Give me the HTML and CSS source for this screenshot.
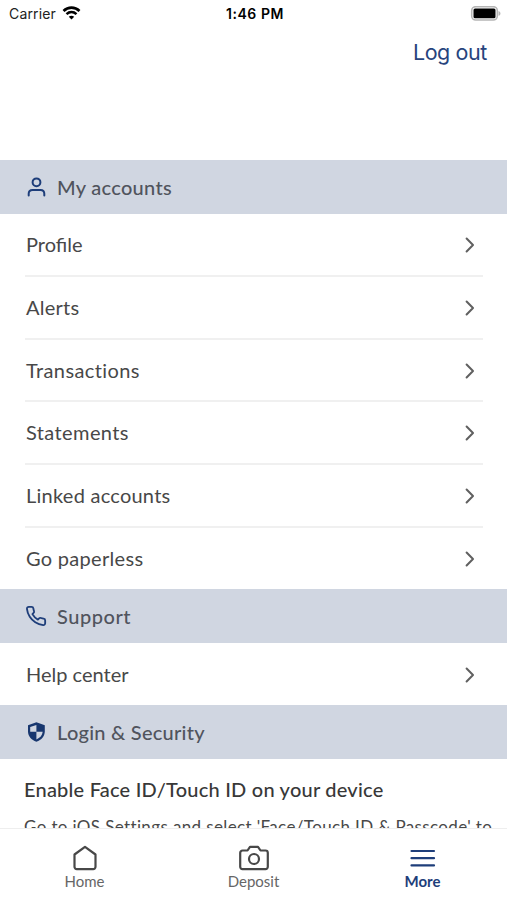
FILE: index.html
```
<!DOCTYPE html>
<html lang="en">
<head>
  <meta charset="UTF-8" />
  <meta name="viewport" content="width=device-width, initial-scale=1.0" />
  <title>More</title>
  <link rel="stylesheet" href="styles.css">
</head>
<body>
  <div class="screen">
    <div class="status-bar">
      <div class="carrier">
        <span>Carrier</span>
        <svg class="wifi" viewBox="0 0 18 14">
          <path d="M1 4.9C5.6.5 12.4.5 17 4.9" fill="none" stroke="#000" stroke-width="2.7" />
          <path d="M4 8.2c3-2.8 7-2.8 10 0" fill="none" stroke="#000" stroke-width="2.5" />
          <path d="M6.3 10.8c1.6-1.4 3.8-1.4 5.4 0L9 13.6z" />
        </svg>
      </div>
      <div class="time">1:46 PM</div>
      <div class="battery">
        <svg viewBox="0 0 31 15" width="31" height="15">
          <rect x="1.7" y=".7" width="25.600" height="13.300" rx="4" fill="#fff" stroke="#b5b5b5" stroke-width="1.600" />
          <rect x="3.500" y="2.500" width="22" height="9.700" rx="1.500" />
          <path d="M28.500 5c2.600.8 2.600 4 0 4.800z" fill="#b5b5b5" />
        </svg>
      </div>
    </div>

    <header class="top">
      <a href="#" class="logout">Log out</a>
    </header>

    <main class="content">
      <h2 class="section">
        <svg viewBox="0 0 22 22">
          <circle cx="11.500" cy="6.300" r="3.900" />
          <path d="M3.700 19.400v-1.600c0-2.300 1.500-3.800 3.800-3.800h8c2.300 0 3.800 1.500 3.800 3.800v1.600" />
        </svg>
        <span class="t-accounts">My accounts</span>
      </h2>
      <ul class="list">
        <li><a href="#"><span>Profile</span><svg viewBox="0 0 10 16"><path d="M1.6 1.5 8 8l-6.4 6.5" /></svg></a></li>
        <li><a href="#"><span class="t-alerts">Alerts</span><svg viewBox="0 0 10 16"><path d="M1.6 1.5 8 8l-6.4 6.5" /></svg></a></li>
        <li><a href="#"><span class="t-trans">Transactions</span><svg viewBox="0 0 10 16"><path d="M1.6 1.5 8 8l-6.4 6.5" /></svg></a></li>
        <li><a href="#"><span class="t-state">Statements</span><svg viewBox="0 0 10 16"><path d="M1.6 1.5 8 8l-6.4 6.5" /></svg></a></li>
        <li><a href="#"><span class="t-linked">Linked accounts</span><svg viewBox="0 0 10 16"><path d="M1.6 1.5 8 8l-6.4 6.5" /></svg></a></li>
        <li><a href="#"><span class="t-paper">Go paperless</span><svg viewBox="0 0 10 16"><path d="M1.6 1.5 8 8l-6.4 6.5" /></svg></a></li>
      </ul>

      <h2 class="section">
        <svg viewBox="0 0 24 24">
          <path d="M22 16.92v3a2 2 0 0 1-2.18 2 19.79 19.79 0 0 1-8.63-3.07 19.5 19.5 0 0 1-6-6 19.79 19.79 0 0 1-3.07-8.67A2 2 0 0 1 4.11 2h3a2 2 0 0 1 2 1.72 12.84 12.84 0 0 0 .7 2.81 2 2 0 0 1-.45 2.11L8.09 9.91a16 16 0 0 0 6 6l1.27-1.27a2 2 0 0 1 2.11-.45 12.84 12.84 0 0 0 2.81.7A2 2 0 0 1 22 16.92z" />
        </svg>
        <span class="t-support">Support</span>
      </h2>
      <ul class="list short">
        <li><a href="#"><span>Help center</span><svg viewBox="0 0 10 16"><path d="M1.6 1.5 8 8l-6.4 6.5" /></svg></a></li>
      </ul>

      <h2 class="section">
        <svg viewBox="0 0 22 22">
          <path class="shield" d="M11.4 1.200 3 4.300v6c0 5 3.300 8.700 8.400 10.500 5.100-1.800 8.400-5.500 8.400-10.500v-6z" />
          <path class="shield-cut" d="M11.400 3.900v6.900H5.200V5.900zM11.400 10.800h6.300c-.4 3.600-2.700 6.200-6.300 7.600z" />
        </svg>
        <span class="t-login">Login &amp; Security</span>
      </h2>
      <div class="info">
        <h3>Enable Face ID/Touch ID on your device</h3>
        <p>Go to iOS Settings and select 'Face/Touch ID &amp; Passcode' to</p>
      </div>
    </main>

    <nav class="tabs">
      <a href="#">
        <svg viewBox="0 0 32 26" width="32" height="26"><path d="M5.5 9.5 16 1.8l10.5 7.7v12.3a2.3 2.3 0 0 1-2.3 2.3H7.8a2.3 2.3 0 0 1-2.3-2.3z" /></svg>
        <span>Home</span>
      </a>
      <a href="#">
        <svg viewBox="0 0 32 26" width="32" height="26">
          <path d="M4.5 5.5h5L12 1.8h8l2.5 3.7h5a2.300 2.300 0 0 1 2.300 2.300v14a2.300 2.300 0 0 1-2.300 2.300h-23a2.300 2.300 0 0 1-2.300-2.300v-14a2.300 2.300 0 0 1 2.300-2.300z" />
          <circle cx="16" cy="14" r="5" />
        </svg>
        <span>Deposit</span>
      </a>
      <a href="#" class="active">
        <svg viewBox="0 0 32 26" width="32" height="26"><path d="M4.500 6h22.500M4.500 13.200h22.500M4.500 20.400h22.500" /></svg>
        <span>More</span>
      </a>
    </nav>
  </div>
</body>
</html>
```

FILE: styles.css
```
* {
  box-sizing: border-box;
}

body {
  margin: 0;
  font-family: Lato, "Open Sans", sans-serif;
  background: #fff;
  color: #484848;
}

a {
  color: inherit;
  text-decoration: none;
}

.screen {
  width: 507px;
  height: 900px;
  display: flex;
  flex-direction: column;
  overflow: hidden;
}

.status-bar {
  height: 28px;
  padding: 0 6px 1px 9px;
  display: grid;
  grid-template-columns: 1fr auto 1fr;
  align-items: center;
  font-family: Inter, sans-serif;
  font-size: 14px;
  color: #222;
}

.carrier {
  display: flex;
  align-items: center;
  gap: 6px;
  letter-spacing: 0.15px;
}

.wifi {
  width: 19px;
  height: 14px;
  margin-top: -2px;
}

.time {
  font-weight: 600;
  letter-spacing: 0.55px;
  color: #000;
}

.battery {
  display: flex;
  justify-content: flex-end;
  margin-top: -1px;
}

.top {
  height: 132px;
  padding: 10px 20px 0;
  text-align: right;
}

.logout {
  font-family: Inter, sans-serif;
  font-size: 21.5px;
  line-height: 29px;
  letter-spacing: -0.4px;
  color: #27447d;
}

.content {
  flex: 1;
  min-height: 0;
  overflow: hidden;
}

.section {
  height: 54px;
  margin: 0;
  padding: 0 25px;
  display: flex;
  align-items: center;
  gap: 10px;
  background: #d0d6e1;
  color: #50545d;
  font-size: 20px;
  font-weight: 500;
}

.section svg {
  width: 22px;
  height: 22px;
  fill: none;
  stroke: #1e3e7a;
  stroke-width: 2;
  stroke-linecap: round;
  stroke-linejoin: round;
}

.section .shield {
  fill: #18376f;
  stroke: none;
}

.section .shield-cut {
  fill: #d0d6e1;
  stroke: none;
}

.list {
  height: 375px;
  margin: 0;
  padding: 0 24px 0 25px;
  list-style: none;
  display: flex;
  flex-direction: column;
}

.list.short {
  height: 62px;
}

.list li {
  flex: 1;
  border-bottom: 2px solid #f0f0f0;
}

.list li:last-child {
  border-bottom: none;
}

.list a {
  height: 100%;
  padding: 1px 8px 0 0;
  display: flex;
  align-items: center;
  justify-content: space-between;
  font-size: 20px;
}

.list span {
  padding: 0 0 2px 1px;
}

.list svg {
  width: 10px;
  height: 16px;
  fill: none;
  stroke: #606060;
  stroke-width: 2;
  stroke-linecap: round;
  stroke-linejoin: round;
}

.t-accounts,
.t-paper {
  letter-spacing: 0.3px;
}

.t-alerts,
.t-linked,
.t-login {
  letter-spacing: 0.25px;
}

.t-trans,
.t-state {
  letter-spacing: 0.4px;
}

.t-support {
  letter-spacing: 0.55px;
}

.info {
  padding: 17px 0 0 24px;
  white-space: nowrap;
}

.info h3 {
  margin: 0;
  font-size: 20px;
  line-height: 26px;
  font-weight: 500;
  letter-spacing: 0.22px;
  color: #383838;
}

.info p {
  margin: 13px 0 0;
  font-size: 17px;
  line-height: 24px;
  letter-spacing: 0.37px;
}

.tabs {
  height: 72px;
  border-top: 1px solid #eee;
  padding-top: 16px;
  background: #fff;
  display: grid;
  grid-template-columns: repeat(3, 1fr);
}

.tabs a {
  display: flex;
  flex-direction: column;
  align-items: center;
  font-size: 15px;
  line-height: 20px;
  color: #666;
}

.tabs svg {
  fill: none;
  stroke: #484848;
  stroke-width: 2.2;
  stroke-linecap: round;
  stroke-linejoin: round;
}

.tabs .active {
  color: #1e3e7a;
  font-weight: 700;
}

.tabs .active svg {
  stroke: #1e3e7a;
}
```
